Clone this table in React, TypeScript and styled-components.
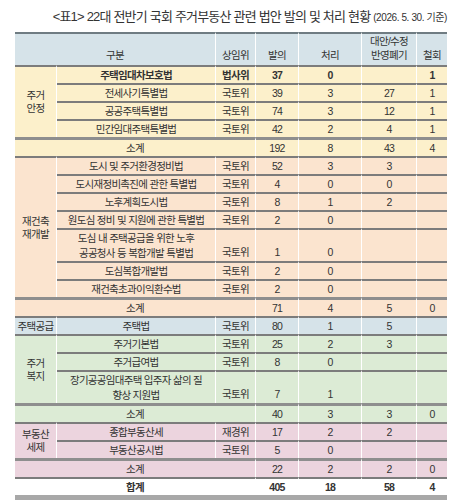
import React from 'react';
import styled, { createGlobalStyle } from 'styled-components';

const Global = createGlobalStyle`
  html, body { margin: 0; padding: 0; background: #ffffff; }
  body { font-family: "Liberation Sans", "Noto Sans CJK KR", sans-serif; color: #333333; }
`;

const C = {
  head: '#d6e3e9',
  yellow: '#fcf0cb',
  peach: '#fbe4cf',
  blue: '#d6e3e9',
  green: '#dcebd5',
  pink: '#ecd4de',
  white: '#ffffff',
};

const Page = styled.div`
  width: 451px;
  padding: 8px 4px 0 15px;
  box-sizing: border-box;
`;

const Title = styled.h1`
  margin: 0;
  height: 24px;
  text-align: right;
  font-size: 13px;
  font-weight: normal;
  letter-spacing: -0.8px;
  line-height: 18px;
  color: #333333;
  white-space: nowrap;
`;

const TitleNote = styled.span`
  font-size: 10px;
  letter-spacing: -0.4px;
`;

const Table = styled.table`
  width: 432px;
  border-collapse: separate;
  border-spacing: 0;
  table-layout: fixed;
  font-size: 10.5px;
  letter-spacing: -0.7px;
  border-bottom: 5px solid #a8a8a8;
`;

const Th = styled.th`
  background: ${C.head};
  border-top: 2px solid #6f7c82;
  border-right: 1px solid #ffffff;
  height: 31px;
  padding: 0 0 3px;
  box-sizing: border-box;
  font-weight: normal;
  vertical-align: bottom;
  line-height: 14px;
  text-align: center;
  color: #333333;
  &:last-child { border-right: none; }
`;

type Line = 'none' | 'thin' | 'thick';

const lineStyle = (l: Line) =>
  l === 'thick' ? '3px solid #8e8e8e' : l === 'thin' ? '2px solid #7c7c7c' : 'none';

const Td = styled.td<{ $bg: string; $line?: Line; $bold?: boolean; $h?: number; $valign?: string; $last?: boolean }>`
  background: ${(p) => p.$bg};
  border-top: ${(p) => lineStyle(p.$line || 'thin')};
  border-right: ${(p) => (p.$last ? 'none' : '1px solid #ffffff')};
  height: ${(p) => p.$h || 18}px;
  padding: 0 1px ${(p) => (p.$valign === 'bottom' ? 2 : 0)}px;
  box-sizing: border-box;
  text-align: center;
  vertical-align: ${(p) => p.$valign || 'middle'};
  font-weight: ${(p) => (p.$bold ? 'bold' : 'normal')};
  line-height: 14px;
  color: #333333;
  white-space: nowrap;
`;

const GroupCell = styled.td<{ $bg: string }>`
  background: ${(p) => p.$bg};
  border-top: 2px solid #7c7c7c;
  border-right: 1px solid #ffffff;
  text-align: center;
  vertical-align: middle;
  line-height: 13px;
  padding: 0;
  color: #333333;
  white-space: nowrap;
`;

const Law = styled.span`
  display: inline-block;
  line-height: 15px;
`;

type Row = {
  law: string[];
  com: string;
  v: [string, string, string, string];
  bold?: boolean;
};

type Group = {
  name: string[];
  bg: string;
  rows: Row[];
  sub?: [string, string, string, string];
};

const groups: Group[] = [
  {
    name: ['주거', '안정'],
    bg: C.yellow,
    rows: [
      { law: ['주택임대차보호법'], com: '법사위', v: ['37', '0', '', '1'], bold: true },
      { law: ['전세사기특별법'], com: '국토위', v: ['39', '3', '27', '1'] },
      { law: ['공공주택특별법'], com: '국토위', v: ['74', '3', '12', '1'] },
      { law: ['민간임대주택특별법'], com: '국토위', v: ['42', '2', '4', '1'] },
    ],
    sub: ['192', '8', '43', '4'],
  },
  {
    name: ['재건축', '재개발'],
    bg: C.peach,
    rows: [
      { law: ['도시 및 주거환경정비법'], com: '국토위', v: ['52', '3', '3', ''] },
      { law: ['도시재정비촉진에 관한 특별법'], com: '국토위', v: ['4', '0', '0', ''] },
      { law: ['노후계획도시법'], com: '국토위', v: ['8', '1', '2', ''] },
      { law: ['원도심 정비 및 지원에 관한 특별법'], com: '국토위', v: ['2', '0', '', ''] },
      { law: ['도심 내 주택공급을 위한 노후', '공공청사 등 복합개발 특별법'], com: '국토위', v: ['1', '0', '', ''] },
      { law: ['도심복합개발법'], com: '국토위', v: ['2', '0', '', ''] },
      { law: ['재건축초과이익환수법'], com: '국토위', v: ['2', '0', '', ''] },
    ],
    sub: ['71', '4', '5', '0'],
  },
  {
    name: ['주택공급'],
    bg: C.blue,
    rows: [{ law: ['주택법'], com: '국토위', v: ['80', '1', '5', ''] }],
  },
  {
    name: ['주거', '복지'],
    bg: C.green,
    rows: [
      { law: ['주거기본법'], com: '국토위', v: ['25', '2', '3', ''] },
      { law: ['주거급여법'], com: '국토위', v: ['8', '0', '', ''] },
      { law: ['장기공공임대주택 입주자 삶의 질', '향상 지원법'], com: '국토위', v: ['7', '1', '', ''] },
    ],
    sub: ['40', '3', '3', '0'],
  },
  {
    name: ['부동산', '세제'],
    bg: C.pink,
    rows: [
      { law: ['종합부동산세'], com: '재경위', v: ['17', '2', '2', ''] },
      { law: ['부동산공시법'], com: '국토위', v: ['5', '0', '', ''] },
    ],
    sub: ['22', '2', '2', '0'],
  },
];

function GroupRows({ g }: { g: Group }) {
  return (
    <>
      {g.rows.map((r, i) => {
        const two = r.law.length > 1;
        const h = two ? 33 : 18;
        const va = two ? 'bottom' : 'middle';
        return (
          <tr key={i}>
            {i === 0 && (
              <GroupCell $bg={g.bg} rowSpan={g.rows.length}>
                {g.name.map((n, k) => (
                  <React.Fragment key={k}>
                    {k > 0 && <br />}
                    {n}
                  </React.Fragment>
                ))}
              </GroupCell>
            )}
            <Td $bg={g.bg} $h={h} $bold={r.bold}>
              <Law>
                {r.law.map((n, k) => (
                  <React.Fragment key={k}>
                    {k > 0 && <br />}
                    {n}
                  </React.Fragment>
                ))}
              </Law>
            </Td>
            <Td $bg={g.bg} $h={h} $bold={r.bold} $valign={va}>{r.com}</Td>
            {r.v.map((x, k) => (
              <Td key={k} $bg={g.bg} $h={h} $bold={r.bold} $valign={va} $last={k === 3}>
                {x}
              </Td>
            ))}
          </tr>
        );
      })}
      {g.sub && (
        <tr>
          <Td $bg={g.bg} $line="thick" $h={19} colSpan={3}>소계</Td>
          {g.sub.map((x, k) => (
            <Td key={k} $bg={g.bg} $line="thick" $h={19} $last={k === 3}>{x}</Td>
          ))}
        </tr>
      )}
    </>
  );
}

export default function App() {
  return (
    <>
      <Global />
      <Page>
        <Title>
          &lt;표1&gt; 22대 전반기 국회 주거부동산 관련 법안 발의 및 처리 현황 <TitleNote>(2026. 5. 30. 기준)</TitleNote>
        </Title>
        <Table>
          <colgroup>
            <col style={{ width: 42 }} />
            <col style={{ width: 159 }} />
            <col style={{ width: 40 }} />
            <col style={{ width: 43 }} />
            <col style={{ width: 63 }} />
            <col style={{ width: 55 }} />
            <col style={{ width: 30 }} />
          </colgroup>
          <thead>
            <tr>
              <Th colSpan={2}>구분</Th>
              <Th>상임위</Th>
              <Th>발의</Th>
              <Th>처리</Th>
              <Th>
                대안/수정
                <br />
                반영폐기
              </Th>
              <Th>철회</Th>
            </tr>
          </thead>
          <tbody>
            {groups.map((g, i) => (
              <GroupRows key={i} g={g} />
            ))}
            <tr>
              <Td $bg={C.white} $bold colSpan={3}>합계</Td>
              <Td $bg={C.white} $bold>405</Td>
              <Td $bg={C.white} $bold>18</Td>
              <Td $bg={C.white} $bold>58</Td>
              <Td $bg={C.white} $bold $last>4</Td>
            </tr>
          </tbody>
        </Table>
      </Page>
    </>
  );
}
